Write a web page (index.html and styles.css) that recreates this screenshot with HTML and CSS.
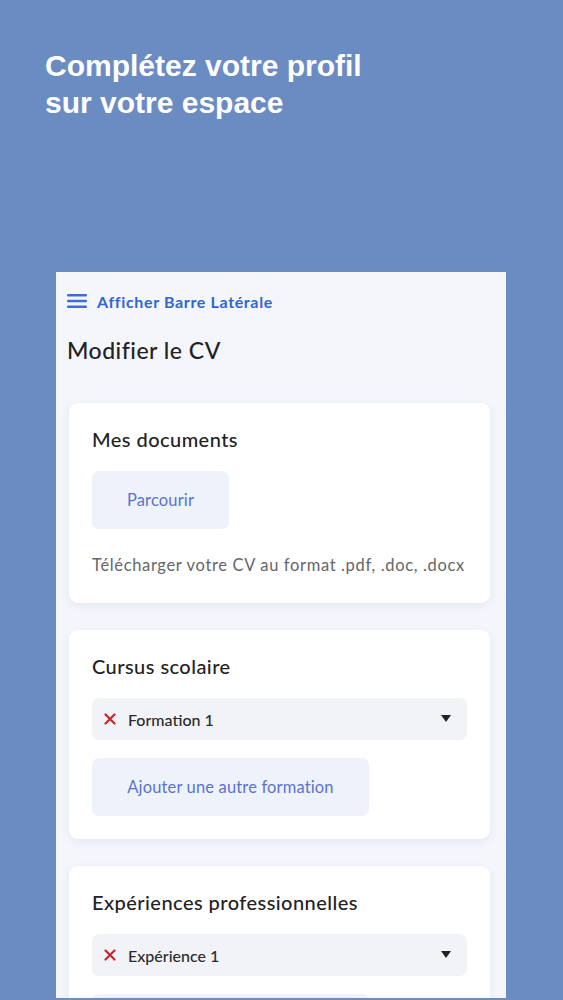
FILE: index.html
```html
<!DOCTYPE html>
<html lang="fr">
<head>
<meta charset="utf-8">
<title>Complétez votre profil</title>
<link rel="stylesheet" href="styles.css">
</head>
<body>
<div class="page">
  <h1 class="headline">Complétez votre profil<br>sur votre espace</h1>
  <div class="screen">
    <div class="sidebar-toggle">
      <svg class="burger" width="20" height="16" viewBox="0 0 20 16"><rect x="0" y="1" width="20" height="2.6" rx="1" fill="#3b6fd6"/><rect x="0" y="6.7" width="20" height="2.6" rx="1" fill="#3b6fd6"/><rect x="0" y="12.4" width="20" height="2.6" rx="1" fill="#3b6fd6"/></svg>
      <span>Afficher Barre Latérale</span>
    </div>
    <h2 class="title">Modifier le CV</h2>

    <section class="card">
      <h3 class="card-title">Mes documents</h3>
      <button class="soft-btn btn-browse">Parcourir</button>
      <p class="hint">Télécharger votre CV au format .pdf, .doc, .docx</p>
    </section>

    <section class="card">
      <h3 class="card-title">Cursus scolaire</h3>
      <div class="select">
        <svg class="remove" width="12" height="12" viewBox="0 0 12 12"><path d="M1.5 1.5 L10.5 10.5 M10.5 1.5 L1.5 10.5" stroke="#c62828" stroke-width="2.2" stroke-linecap="round"/></svg>
        <span class="select-label">Formation 1</span>
        <svg class="caret" width="10" height="8" viewBox="0 0 10 8"><path d="M0 0 H10 L5 7 Z" fill="#222"/></svg>
      </div>
      <button class="soft-btn btn-add">Ajouter une autre formation</button>
    </section>

    <section class="card">
      <h3 class="card-title">Expériences professionnelles</h3>
      <div class="select">
        <svg class="remove" width="12" height="12" viewBox="0 0 12 12"><path d="M1.5 1.5 L10.5 10.5 M10.5 1.5 L1.5 10.5" stroke="#c62828" stroke-width="2.2" stroke-linecap="round"/></svg>
        <span class="select-label">Expérience 1</span>
        <svg class="caret" width="10" height="8" viewBox="0 0 10 8"><path d="M0 0 H10 L5 7 Z" fill="#222"/></svg>
      </div>
      <button class="soft-btn btn-add" aria-label="Ajouter une autre expérience"></button>
    </section>
  </div>
</div>
</body>
</html>
```

FILE: styles.css
```css
html, body {
  margin: 0;
  padding: 0;
}
body {
  background: #6b8bc3;
  font-family: "Lato", "Noto Sans", sans-serif;
  overflow: hidden;
  height: 1000px;
}
.page {
  width: 563px;
  height: 1000px;
  overflow: hidden;
}
.headline {
  margin: 0;
  padding: 47px 0 0 45px;
  color: #ffffff;
  font-family: "Liberation Sans", Arial, sans-serif;
  font-weight: bold;
  font-size: 30px;
  line-height: 37px;
}
.screen {
  margin: 151px 0 0 56px;
  width: 450px;
  height: 726px;
  background: #f4f6fc;
  box-sizing: border-box;
  padding: 17px 16px 0 11px;
  overflow: hidden;
}
.sidebar-toggle {
  display: flex;
  align-items: center;
  gap: 10px;
  color: #2f66cf;
  font-weight: 700;
  font-size: 16px;
  letter-spacing: 0.65px;
  height: 24px;
}
.burger {
  display: block;
}
.title {
  margin: 22px 0 0 0;
  font-weight: 500;
  font-size: 23px;
  letter-spacing: 0.5px;
  line-height: 30px;
  color: #222;
}
.card {
  background: #ffffff;
  margin: 38px 0 0 2px;
  border-radius: 9px;
  box-shadow: 0 3px 10px rgba(120, 135, 170, 0.12);
  padding: 20px 23px 23px 23px;
}
.card + .card {
  margin-top: 27px;
}
.card-title {
  margin: 0;
  font-weight: 500;
  font-size: 20px;
  letter-spacing: 0.45px;
  line-height: 32px;
  color: #222;
}
.soft-btn {
  display: block;
  border: none;
  background: #eef2fa;
  color: #5b72cc;
  font-family: inherit;
  font-size: 16.5px;
  letter-spacing: 0.15px;
  border-radius: 7px;
  height: 58px;
  padding: 0;
  text-align: center;
}
.btn-browse {
  margin-top: 16px;
  width: 137px;
}
.hint {
  margin: 24px 0 3px 0;
  font-size: 16.5px;
  letter-spacing: 0.65px;
  line-height: 24px;
  color: #666;
}
.select {
  margin-top: 16px;
  height: 42px;
  background: #f1f3f6;
  border-radius: 7px;
  display: flex;
  align-items: center;
  padding: 0 16px 0 12px;
}
.remove {
  display: block;
  margin-right: 12px;
  flex: none;
}
.select-label {
  flex: 1;
  font-size: 16px;
  font-weight: 500;
  color: #2a2a2a;
}
.caret {
  display: block;
}
.btn-add {
  margin-top: 18px;
  width: 277px;
}
```
